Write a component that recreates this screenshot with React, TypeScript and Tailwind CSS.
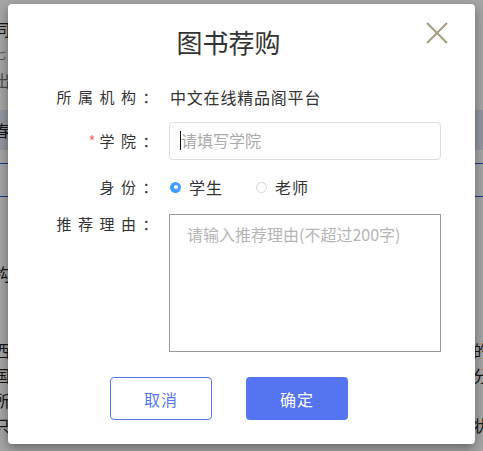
import React from "react";

const cjk = "font-['Noto_Sans_CJK_SC','Noto_Sans',sans-serif]";

function PageBehind() {
  // only slivers of the page show round the dialog
  return (
    <div className="flex flex-col text-[16px] text-[#222] leading-[20px]">
      <div className="mt-[19px] ml-[-6px]">同</div>
      <div className="mt-[8px] ml-[-6px] text-[12px] leading-[14px] text-[#888]">七</div>
      <div className="mt-[9px] ml-[-6px] text-[#777]">出</div>
      <div className="mt-[20px] h-[40px] bg-[#e3e8f8] flex items-center">
        <span className="ml-[-6px]">春</span>
      </div>
      <div className="mt-[13px] h-px bg-[#2f55d4]" />
      <div className="mt-[32px] h-px bg-[#2f55d4]" />
      <div className="mt-[67px] ml-[-6px] text-[17px]">构</div>
      <div className="mt-[56px] flex flex-col gap-[5px]">
        <div className="flex justify-between ml-[-6px] mr-[-6px]">
          <span>西</span>
          <span>的</span>
        </div>
        <div className="flex justify-between ml-[-6px] mr-[-6px]">
          <span>国</span>
          <span>分</span>
        </div>
        <div className="flex justify-between ml-[-6px] mr-[-6px]">
          <span>所</span>
          <span></span>
        </div>
        <div className="flex justify-between ml-[-6px] mr-[-6px]">
          <span>只</span>
          <span>状</span>
        </div>
      </div>
    </div>
  );
}

function Label({ text, required }: { text: string; required?: boolean }) {
  return (
    <div className="w-[156px] shrink-0 text-right text-[15px] leading-[20px] text-[#333] tracking-[6.5px]">
      {required && <span className="text-[#f56c6c] mr-[4px] tracking-normal">*</span>}
      {text}
    </div>
  );
}

function Radio({ checked, label }: { checked?: boolean; label: string }) {
  return (
    <div className="flex items-center gap-[8px]">
      {checked ? (
        <span className="w-[11px] h-[11px] rounded-full bg-[#409eff] flex items-center justify-center">
          <span className="w-[4px] h-[4px] rounded-full bg-white" />
        </span>
      ) : (
        <span className="w-[11px] h-[11px] rounded-full border border-[#d6d6d6] bg-white" />
      )}
      <span className="text-[16px] tracking-[1px] text-[#333]">{label}</span>
    </div>
  );
}

export default function App() {
  return (
    <div className={`relative w-[483px] h-[451px] overflow-hidden bg-white ${cjk}`}>
      <PageBehind />
      <div className="absolute inset-0 bg-black/35" />

      <div className="absolute left-[8px] top-[4px] w-[467px] h-[440px] bg-white rounded-[4px] shadow-[0_4px_12px_rgba(0,0,0,0.4)]">
        <button className="absolute right-[27px] top-[18px] w-[22px] h-[22px]">
          <svg viewBox="0 0 22 22" className="w-[22px] h-[22px]">
            <path d="M1 1L21 21M21 1L1 21" stroke="#a59c84" strokeWidth="2" fill="none" />
          </svg>
        </button>

        <h2 className="mt-[20px] pr-[26px] text-center text-[26px] leading-[36px] text-[#333]">图书荐购</h2>

        <div className="mt-[18px] h-[38px] flex items-center">
          <Label text="所属机构：" />
          <div className="ml-[6px] text-[16px] tracking-[0.8px] text-[#333]">中文在线精品阁平台</div>
        </div>

        <div className="mt-[6px] h-[38px] flex items-center">
          <Label text="学院：" required />
          <div className="ml-[5px] w-[272px] h-[38px] border border-[#dcdfe6] rounded-[4px] flex items-center pl-[10px] pb-[2px]">
            <span className="w-px h-[19px] bg-[#111]" />
            <span className="text-[16px] text-[#aaa]">请填写学院</span>
          </div>
        </div>

        <div className="mt-[8px] h-[38px] flex items-center">
          <Label text="身份：" />
          <div className="ml-[6px] flex items-center gap-[33px]">
            <Radio checked label="学生" />
            <Radio label="老师" />
          </div>
        </div>

        <div className="mt-[8px] flex items-start">
          <Label text="推荐理由：" />
          <div className="ml-[5px] w-[272px] h-[138px] border border-[#999] px-[17px] pt-[8px] text-[16px] leading-[22px] text-[#b5b5b5]">
            请输入推荐理由(不超过200字)
          </div>
        </div>

        <div className="mt-[25px] ml-[102px] flex gap-[34px]">
          <button className="w-[102px] h-[43px] rounded-[4px] border border-[#5676f0] text-[16px] text-[#5676f0] tracking-[1px]">
            取消
          </button>
          <button className="w-[102px] h-[43px] rounded-[4px] bg-[#5574f2] text-[16px] text-white tracking-[1px]">
            确定
          </button>
        </div>
      </div>
    </div>
  );
}
